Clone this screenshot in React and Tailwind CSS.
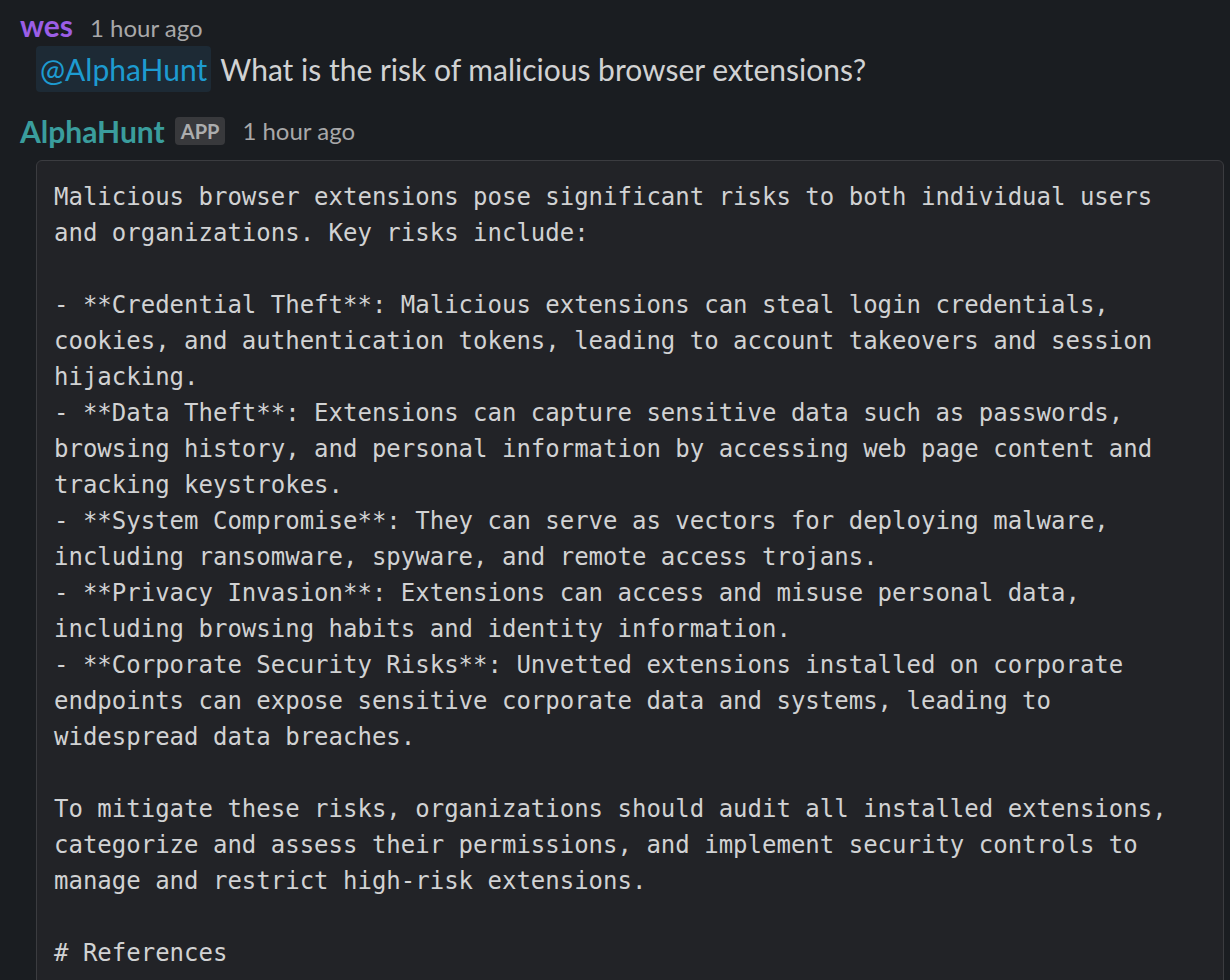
const LINES = [
  'Malicious browser extensions pose significant risks to both individual users',
  'and organizations. Key risks include:',
  '',
  '- **Credential Theft**: Malicious extensions can steal login credentials,',
  'cookies, and authentication tokens, leading to account takeovers and session',
  'hijacking.',
  '- **Data Theft**: Extensions can capture sensitive data such as passwords,',
  'browsing history, and personal information by accessing web page content and',
  'tracking keystrokes.',
  '- **System Compromise**: They can serve as vectors for deploying malware,',
  'including ransomware, spyware, and remote access trojans.',
  '- **Privacy Invasion**: Extensions can access and misuse personal data,',
  'including browsing habits and identity information.',
  '- **Corporate Security Risks**: Unvetted extensions installed on corporate',
  'endpoints can expose sensitive corporate data and systems, leading to',
  'widespread data breaches.',
  '',
  'To mitigate these risks, organizations should audit all installed extensions,',
  'categorize and assess their permissions, and implement security controls to',
  'manage and restrict high-risk extensions.',
  '',
  '# References',
  '',
  '',
]

const sans = { fontFamily: 'Lato, "Noto Sans", sans-serif' }
const mono = { fontFamily: '"DejaVu Sans Mono", "Liberation Mono", monospace' }

export default function App() {
  return (
    <div className="h-[980px] w-[1230px] overflow-hidden bg-[#1a1d21] pl-5" style={sans}>
      {/* user message */}
      <div className="flex items-baseline gap-[17px] pt-[3px] leading-[44px]">
        <span className="text-[30px] font-bold text-[#9b5ee6]">wes</span>
        <span className="text-[24px] text-[#a8a8a9]">1 hour ago</span>
      </div>
      <div className="mt-[-4px] flex items-center pl-4 text-[30px] leading-[46px] text-[#d1d2d3]">
        <span className="rounded-[4px] bg-[#1d2a35] px-[4px] text-[#1d9bd1]">@AlphaHunt</span>
        <span className="ml-[9px]">What is the risk of malicious browser extensions?</span>
      </div>

      {/* bot reply */}
      <div className="mt-[21px] flex items-center leading-[36px]">
        <span className="text-[30px] font-bold text-[#3a9d9d]">AlphaHunt</span>
        <span className="ml-[10px] rounded-[4px] bg-[#38393c] px-[6px] text-[20px] font-bold leading-[28px] text-[#acadae]">
          APP
        </span>
        <span className="ml-[17px] text-[24px] text-[#a8a8a9]">1 hour ago</span>
      </div>
      <div
        className="ml-4 mr-[6px] mt-[11px] rounded-[6px] border border-[#3b3c40] bg-[#222327] px-[17px] pt-[18px] text-[24px] leading-[36px] text-[#d1d2d3]"
        style={mono}
      >
        {LINES.map((line, i) => (
          <div key={i} className="h-[36px] whitespace-pre">
            {line}
          </div>
        ))}
      </div>
    </div>
  )
}
